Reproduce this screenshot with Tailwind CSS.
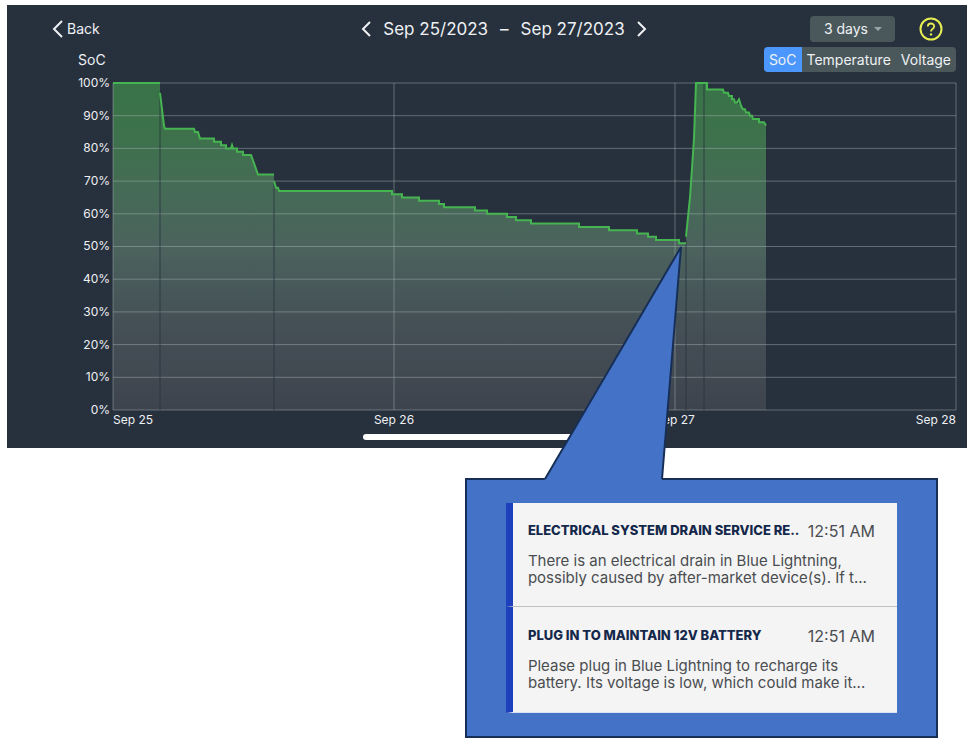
<!DOCTYPE html>
<html lang="en">
<head>
    <meta charset="UTF-8">
    <meta name="viewport" content="width=device-width, initial-scale=1.0">
    <script src="https://cdn.jsdelivr.net/npm/@tailwindcss/browser@4"></script>
    <title>Battery SoC</title>
</head>
<body class="bg-white pt-[5px] pb-[6px] pl-[7px] pr-[6px] font-['Inter',sans-serif]">
    <main class="bg-[#27303d] text-[#eef1f4] pt-[10px] pb-2 pl-[45px] pr-[11px]">
        <header class="grid grid-cols-[1fr_auto_1fr] items-center h-[26px]">
            <a href="#" class="flex items-center gap-1 text-sm">
                <svg class="w-[11px] h-[18px]" viewBox="0 0 11 18" fill="none" stroke="currentColor" stroke-width="2"><path d="M10 1 L2 9 L10 17"/></svg>
                Back
            </a>
            <div class="flex items-center gap-3 text-[17px] leading-7">
                <button type="button" aria-label="Previous days">
                    <svg class="w-[10px] h-4" viewBox="0 0 10 16" fill="none" stroke="currentColor" stroke-width="2"><path d="M9 1 L2 8 L9 15"/></svg>
                </button>
                <span>Sep 25/2023</span>
                <span>–</span>
                <span>Sep 27/2023</span>
                <button type="button" aria-label="Next days">
                    <svg class="w-[10px] h-4" viewBox="0 0 10 16" fill="none" stroke="currentColor" stroke-width="2"><path d="M1 1 L8 8 L1 15"/></svg>
                </button>
            </div>
            <div class="flex items-center justify-end gap-6 pr-[13px]">
                <button type="button" class="flex items-center gap-[6px] h-[26px] pl-[14px] pr-[13px] rounded bg-[#4b585b] text-sm">
                    3 days
                    <svg class="w-2 h-1" viewBox="0 0 8 4" fill="#9aa5a7"><path d="M0 0 H8 L4 4 Z"/></svg>
                </button>
                <button type="button" aria-label="Help">
                    <svg class="w-6 h-6" viewBox="0 0 24 24" fill="none" stroke="#e6ee52" stroke-width="2">
                        <circle cx="12" cy="12" r="10.5"/>
                        <path d="M8.8 9.6 C8.8 5.4 15.2 5.6 15.2 9.4 C15.2 11.8 12 11.8 12 14.6" stroke-width="1.8"/>
                        <circle cx="12" cy="17.4" r="1.2" fill="#e6ee52" stroke="none"/>
                    </svg>
                </button>
            </div>
        </header>

        <div class="flex items-center justify-between mt-[6px] pl-[26px] text-sm">
            <span>SoC</span>
            <div class="flex rounded-sm overflow-hidden bg-[#4b585b]">
                <button type="button" class="h-[25px] px-[5px] bg-[#4c97fd]">SoC</button>
                <button type="button" class="h-[25px] px-[5px]">Temperature</button>
                <button type="button" class="h-[25px] px-[5px]">Voltage</button>
            </div>
        </div>

        <div class="flex mt-[11px]">
            <div class="flex flex-col justify-between w-[61px] -my-2 pr-[3px] text-right text-xs leading-4">
                <span>100%</span>
                <span>90%</span>
                <span>80%</span>
                <span>70%</span>
                <span>60%</span>
                <span>50%</span>
                <span>40%</span>
                <span>30%</span>
                <span>20%</span>
                <span>10%</span>
                <span>0%</span>
            </div>
            <!-- y runs from 0 (100%) to 100 (0%) -->
            <svg class="flex-1 min-w-0 h-[327px] overflow-visible" viewBox="0 0 843 100" preserveAspectRatio="none" fill="none">
                <defs>
                    <linearGradient id="soc" gradientUnits="userSpaceOnUse" x1="0" y1="0" x2="0" y2="100">
                        <stop offset="0" stop-color="#397348"/>
                        <stop offset="0.15" stop-color="#3d724b"/>
                        <stop offset="0.35" stop-color="#466a57"/>
                        <stop offset="0.5" stop-color="#4b635d"/>
                        <stop offset="0.75" stop-color="#454f56"/>
                        <stop offset="1" stop-color="#3e444e"/>
                    </linearGradient>
                </defs>
                <g fill="url(#soc)">
                    <path d="M0 0 H47 V100 H0 Z"/>
                    <path d="M47 3 L51 13 L52 14 H81 L82 15 H85 L87 17 H101 V18 H108 V19 H113 V20 H124 V21 H130 V22 H138 L145 28 H161 V100 H47 Z"/>
                    <path d="M161 30 L163 32 H165 L166 33 H279 V34 H289 V35 H306 V36 H326 V37 H331 V38 H362 V39 H374 V40 H394 V41 H403 V42 H418 V43 H466 V44 H496 V45 H524 V46 H535 V47 H543 V48 H566 V49 H573 V100 H161 Z"/>
                    <path d="M573 47 L577 35 L581 17 L583 0 H594 V2 H610 L611 3 H615 L616 4 H619 V5 L622 6 H624 L628 7 L630 8 H633 V9 H636 L637 10 H640 V11 H646 V12 H651 L653 13 V100 H573 Z"/>
                </g>
                <g stroke="#a9b8b8" stroke-opacity="0.45">
                    <path vector-effect="non-scaling-stroke" d="M0 0 H843 M0 10 H843 M0 20 H843 M0 30 H843 M0 40 H843 M0 50 H843 M0 60 H843 M0 70 H843 M0 80 H843 M0 90 H843 M0 100 H843"/>
                    <path vector-effect="non-scaling-stroke" d="M0 0 V100 M281 0 V100 M562 0 V100 M843 0 V100"/>
                </g>
                <path vector-effect="non-scaling-stroke" stroke="#29323e" stroke-opacity="0.8" d="M47 3 V100 M161 30 V100 M573 48 V100 M591 0 V100"/>
                <g stroke="#46b450" stroke-width="2">
                    <path vector-effect="non-scaling-stroke" d="M0 0 H47"/>
                    <path vector-effect="non-scaling-stroke" d="M47 3 L51 13 L52 14 H81 L82 15 H85 L87 17 H101 V18 H108 V19 H113 V20 H118 L119 19 L120 20 H124 V21 H130 V22 H138 L145 28 H161"/>
                    <path vector-effect="non-scaling-stroke" d="M161 30 L163 32 H165 L166 33 H279 V34 H289 V35 H306 V36 H326 V37 H331 V38 H362 V39 H374 V40 H394 V41 H403 V42 H418 V43 H466 V44 H496 V45 H524 V46 H535 V47 H543 V48 H566 V49 H573"/>
                    <path vector-effect="non-scaling-stroke" d="M573 47 L577 35 L581 17 L583 0 H594 V2 H610 L611 3 H615 L616 4 H619 V5 H621 L622 6 H624 L626 5 L628 7 L630 8 H632 L633 9 H636 L637 10 H639 L640 11 H646 V12 H651 L653 13"/>
                </g>
            </svg>
        </div>

        <div class="grid grid-cols-6 ml-[61px] text-xs leading-5">
            <span>Sep 25</span>
            <span class="col-span-2 text-center">Sep 26</span>
            <span class="col-span-2 text-center">Sep 27</span>
            <span class="text-right">Sep 28</span>
        </div>
        <div class="w-[248px] h-[6px] mt-1 mx-auto -translate-x-[17px] rounded-full bg-white"></div>
    </main>

    <section class="relative w-[473px] mt-[30px] ml-[47.7%] px-[39px] py-[23px] border-2 border-[#172f56] bg-[#4472c6]">
        <!-- callout tail pointing at the 50% drop -->
        <svg class="absolute left-[76px] -top-[236px] w-[142px] h-[238px]" viewBox="0 0 142 238">
            <path d="M1 238 L2 235 L138 3 L119 235 V238 Z" fill="#4472c6"/>
            <path d="M2 235 L138 3 L119 235" fill="none" stroke="#172f56" stroke-width="2"/>
        </svg>
        <article class="h-[104px] pt-[18px] pl-[15px] pr-[22px] border-l-[7px] border-l-[#1f40bd] border-b border-b-[#bcc0c3] bg-[#f4f4f4]">
            <div class="flex items-center justify-between h-5 whitespace-nowrap">
                <h2 class="text-[13px] font-extrabold text-[#14284b]">ELECTRICAL SYSTEM DRAIN SERVICE RE..</h2>
                <time class="text-base text-[#4a4d50]">12:51 AM</time>
            </div>
            <p class="mt-[11px] text-[15px] leading-[17px] text-[#4a4d50] whitespace-nowrap">There is an electrical drain in Blue Lightning,<br>possibly caused by after-market device(s). If t...</p>
        </article>
        <article class="h-[106px] pt-[19px] pl-[15px] pr-[22px] border-l-[7px] border-l-[#1f40bd] border-b border-b-[#dbe3f0] bg-[#f4f4f4]">
            <div class="flex items-center justify-between h-5 whitespace-nowrap">
                <h2 class="text-[13px] font-extrabold text-[#14284b]">PLUG IN TO MAINTAIN 12V BATTERY</h2>
                <time class="text-base text-[#4a4d50]">12:51 AM</time>
            </div>
            <p class="mt-[11px] text-[15px] leading-[17px] text-[#4a4d50] whitespace-nowrap">Please plug in Blue Lightning to recharge its<br>battery. Its voltage is low, which could make it...</p>
        </article>
    </section>
</body>
</html>
